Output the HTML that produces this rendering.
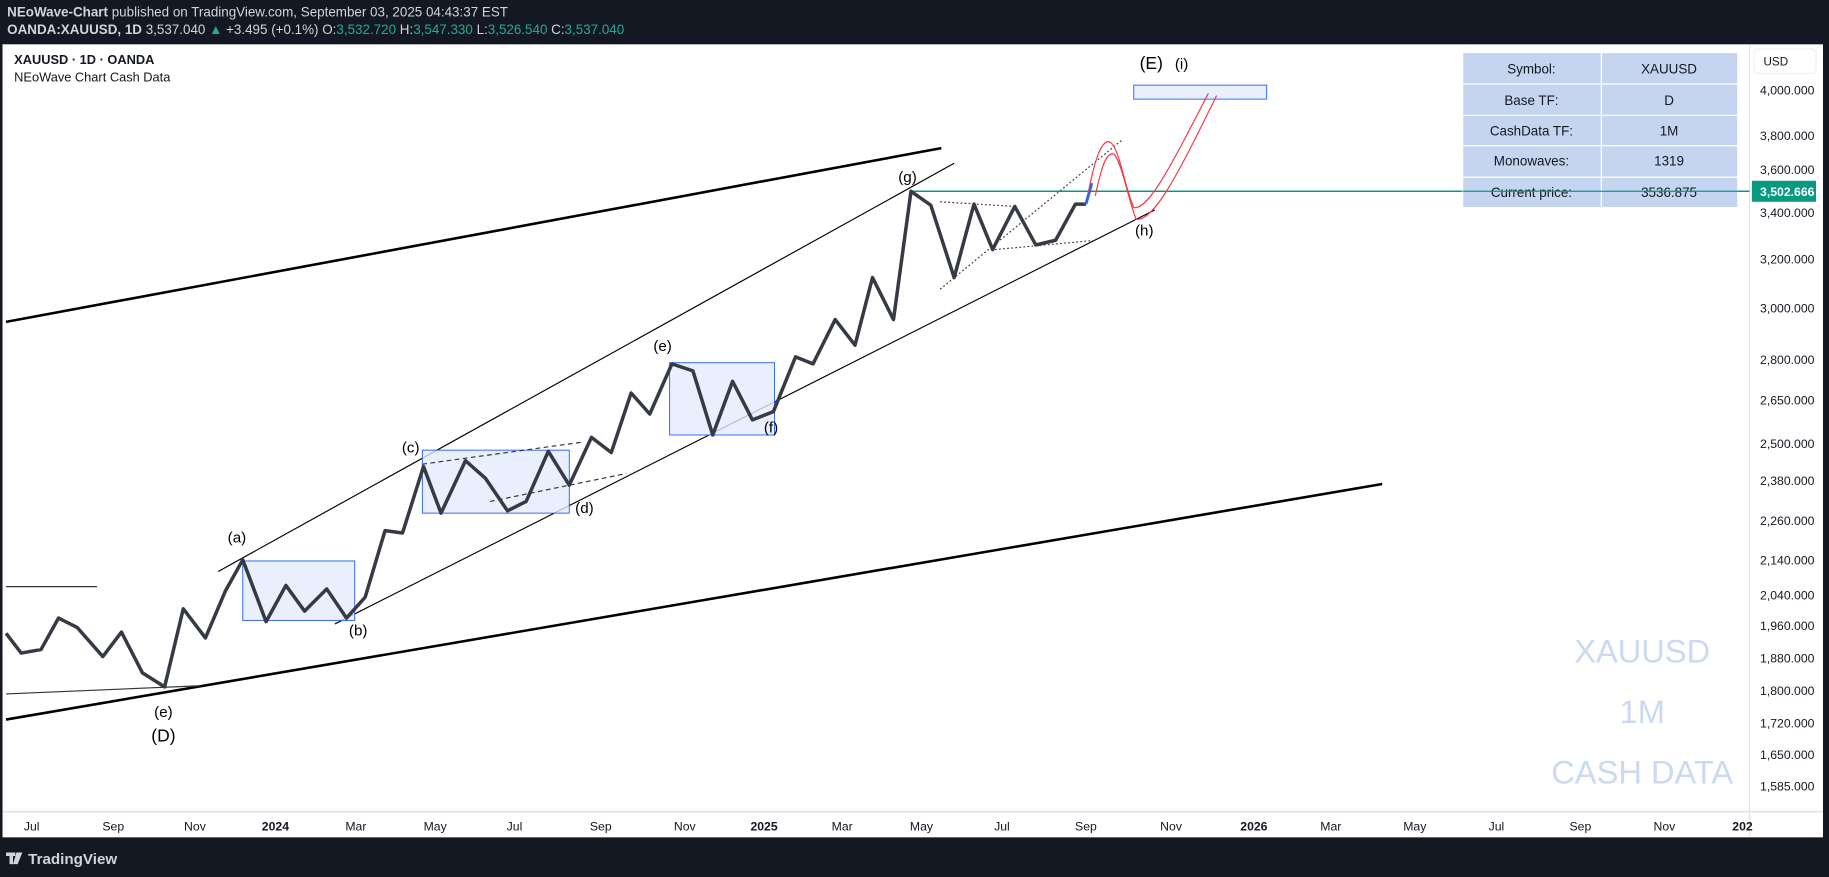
<!DOCTYPE html>
<html><head><meta charset="utf-8"><style>
html,body{margin:0;padding:0;background:#131722;overflow:hidden}
svg{display:block}
text{font-family:"Liberation Sans",sans-serif}
</style></head><body>
<svg width="1829" height="877" viewBox="0 0 1568 752" xmlns="http://www.w3.org/2000/svg">
<rect x="0" y="0" width="1568" height="752" fill="#141823"/>
<text x="6" y="14" font-size="11.5" fill="#d1d4dc"><tspan font-weight="bold">NEoWave-Chart</tspan> published on TradingView.com, September 03, 2025 04:43:37 EST</text>
<text x="6" y="29" font-size="11.5" fill="#d1d4dc"><tspan font-weight="bold">OANDA:XAUUSD, 1D</tspan> 3,537.040 <tspan fill="#22ab94">▲</tspan> +3.495 (+0.1%) O:<tspan fill="#22ab94">3,532.720</tspan> H:<tspan fill="#22ab94">3,547.330</tspan> L:<tspan fill="#22ab94">3,526.540</tspan> C:<tspan fill="#22ab94">3,537.040</tspan></text>
<rect x="2" y="38" width="1561" height="680" fill="#fff"/>
<line x1="1500" y1="38" x2="1500" y2="718" stroke="#e0e3eb"/>
<line x1="2" y1="696" x2="1563" y2="696" stroke="#e0e3eb" stroke-width="1.5"/>
<text x="12" y="55" font-size="11" font-weight="bold" fill="#131722">XAUUSD · 1D · OANDA</text>
<text x="12" y="70" font-size="11" fill="#131722">NEoWave Chart Cash Data</text>
<!-- watermark -->
<g font-size="28" fill="#cbd9f3" text-anchor="middle">
<text x="1408" y="568">XAUUSD</text><text x="1408" y="620">1M</text><text x="1408" y="672">CASH DATA</text>
</g>
<!-- big lines -->
<line x1="5" y1="276" x2="807" y2="127" stroke="#000" stroke-width="2.2"/>
<line x1="5" y1="617" x2="1185" y2="415" stroke="#000" stroke-width="2.2"/>
<line x1="5" y1="503" x2="83" y2="503" stroke="#333" stroke-width="1"/>
<line x1="5" y1="595" x2="172" y2="588" stroke="#333" stroke-width="1"/>
<line x1="187" y1="490" x2="818" y2="140" stroke="#000" stroke-width="1"/>
<line x1="287" y1="535" x2="990" y2="180" stroke="#000" stroke-width="1"/>
<!-- boxes -->
<g fill="#e3ebfb" fill-opacity="0.8" stroke="#2962ff" stroke-width="0.8">
<rect x="208" y="481" width="96" height="51"/>
<rect x="362" y="386" width="126" height="54"/>
<rect x="574" y="311" width="90" height="62"/>
<rect x="972" y="73" width="114" height="12"/>
</g>
<g stroke="#333" stroke-width="1" stroke-dasharray="4,3">
<line x1="362" y1="398" x2="500" y2="379"/>
<line x1="420" y1="430" x2="537" y2="406"/>
</g>
<g stroke="#333" stroke-width="1" stroke-dasharray="1.5,2">
<line x1="806" y1="248" x2="962" y2="120"/>
<line x1="806" y1="173" x2="870" y2="177"/>
<line x1="853" y1="214" x2="940" y2="206"/>
</g>
<line x1="780" y1="164" x2="1500" y2="164" stroke="#089981" stroke-width="1.2"/>
<!-- price path -->
<polyline fill="none" stroke="#363a45" stroke-width="3" stroke-linejoin="round" points="5,543 18,560 35,557 50,530 66,538 88,563 104,542 122,577 141,589 157,522 176,547 193,507 208,480 228,533 245,502 261,524 280,505 297,530 313,512 330,455 345,457 363,400 378,440 399,395 416,410 435,438 451,430 470,387 488,416 507,375 524,388 541,337 557,355 576,312 594,318 611,373 628,327 645,360 663,353 682,306 697,312 716,274 733,296 748,238 766,274 781,164 798,176 818,238 835,175 851,214 870,177 888,210 905,206 922,175 931,175"/>
<line x1="931" y1="175" x2="936" y2="157" stroke="#2962ff" stroke-width="2.5"/>
<!-- red projection -->
<path d="M933,165 C938,140 944,118 952,122 C960,128 964,160 972,178 C985,180 1005,140 1036,80" fill="none" stroke="#f23645" stroke-width="1"/>
<path d="M939,168 C944,145 948,130 955,132 C962,140 967,170 974,188 C990,190 1012,145 1043,82" fill="none" stroke="#f23645" stroke-width="1"/>
<!-- labels -->
<g font-size="13" fill="#000" text-anchor="middle">
<text x="203" y="465">(a)</text><text x="307" y="545">(b)</text><text x="352" y="388">(c)</text>
<text x="501" y="440">(d)</text><text x="568" y="301">(e)</text><text x="661" y="371">(f)</text>
<text x="778" y="156">(g)</text><text x="981" y="202">(h)</text><text x="140" y="615">(e)</text>
<text x="140" y="636" font-size="15">(D)</text><text x="987" y="59" font-size="15">(E)</text><text x="1013" y="59">(i)</text>
</g>
<!-- table -->
<g fill="#c5d5f0" stroke="#fff" stroke-width="1">
<rect x="1254" y="45" width="119" height="27"/><rect x="1373" y="45" width="117" height="27"/>
<rect x="1254" y="72" width="119" height="27"/><rect x="1373" y="72" width="117" height="27"/>
<rect x="1254" y="99" width="119" height="26"/><rect x="1373" y="99" width="117" height="26"/>
<rect x="1254" y="125" width="119" height="27"/><rect x="1373" y="125" width="117" height="27"/>
<rect x="1254" y="152" width="119" height="26"/><rect x="1373" y="152" width="117" height="26"/>
</g>
<g font-size="11.5" fill="#131722" text-anchor="middle">
<text x="1313" y="63">Symbol:</text><text x="1431" y="63">XAUUSD</text>
<text x="1313" y="90">Base TF:</text><text x="1431" y="90">D</text>
<text x="1313" y="116">CashData TF:</text><text x="1431" y="116">1M</text>
<text x="1313" y="142">Monowaves:</text><text x="1431" y="142">1319</text>
<text x="1313" y="169">Current price:</text><text x="1431" y="169">3536.875</text>
</g>
<line x1="1254" y1="164" x2="1500" y2="164" stroke="#089981" stroke-width="1"/>
<!-- price axis -->
<rect x="1504" y="42" width="53" height="21" rx="3" fill="#fff" stroke="#eef0f3"/>
<text x="1512" y="56" font-size="10" fill="#131722">USD</text>
<g font-size="10.5" fill="#131722">
<text x="1509" y="81">4,000.000</text><text x="1509" y="120">3,800.000</text><text x="1509" y="149">3,600.000</text>
<text x="1509" y="186">3,400.000</text><text x="1509" y="226">3,200.000</text><text x="1509" y="268">3,000.000</text>
<text x="1509" y="312">2,800.000</text><text x="1509" y="347">2,650.000</text><text x="1509" y="384">2,500.000</text>
<text x="1509" y="416">2,380.000</text><text x="1509" y="450">2,260.000</text><text x="1509" y="484">2,140.000</text>
<text x="1509" y="514">2,040.000</text><text x="1509" y="540">1,960.000</text><text x="1509" y="568">1,880.000</text>
<text x="1509" y="596">1,800.000</text><text x="1509" y="624">1,720.000</text><text x="1509" y="651">1,650.000</text>
<text x="1509" y="678">1,585.000</text>
</g>
<rect x="1502" y="155" width="55" height="18" fill="#089981"/>
<text x="1509" y="168" font-size="10.5" font-weight="bold" fill="#fff">3,502.666</text>
<!-- time axis -->
<g font-size="10.5" fill="#131722" text-anchor="middle">
<text x="27" y="712">Jul</text><text x="97" y="712">Sep</text><text x="167" y="712">Nov</text><text x="236" y="712" font-weight="bold">2024</text>
<text x="305" y="712">Mar</text><text x="373" y="712">May</text><text x="441" y="712">Jul</text><text x="515" y="712">Sep</text>
<text x="587" y="712">Nov</text><text x="655" y="712" font-weight="bold">2025</text><text x="722" y="712">Mar</text><text x="790" y="712">May</text>
<text x="859" y="712">Jul</text><text x="931" y="712">Sep</text><text x="1004" y="712">Nov</text><text x="1075" y="712" font-weight="bold">2026</text>
<text x="1141" y="712">Mar</text><text x="1213" y="712">May</text><text x="1283" y="712">Jul</text><text x="1355" y="712">Sep</text>
<text x="1427" y="712">Nov</text><text x="1494" y="712" font-weight="bold">202</text>
</g>
<!-- logo -->
<g fill="#d1d4dc">
<rect x="5" y="731" width="8" height="3"/><rect x="8" y="731" width="3" height="10"/>
<path d="M14,731 L19,731 L15,741 L11,741 Z"/>
<circle cx="15" cy="732.5" r="1.5"/>
</g>
<text x="24" y="741" font-size="13" font-weight="bold" fill="#d1d4dc">TradingView</text>
</svg>
</body></html>
